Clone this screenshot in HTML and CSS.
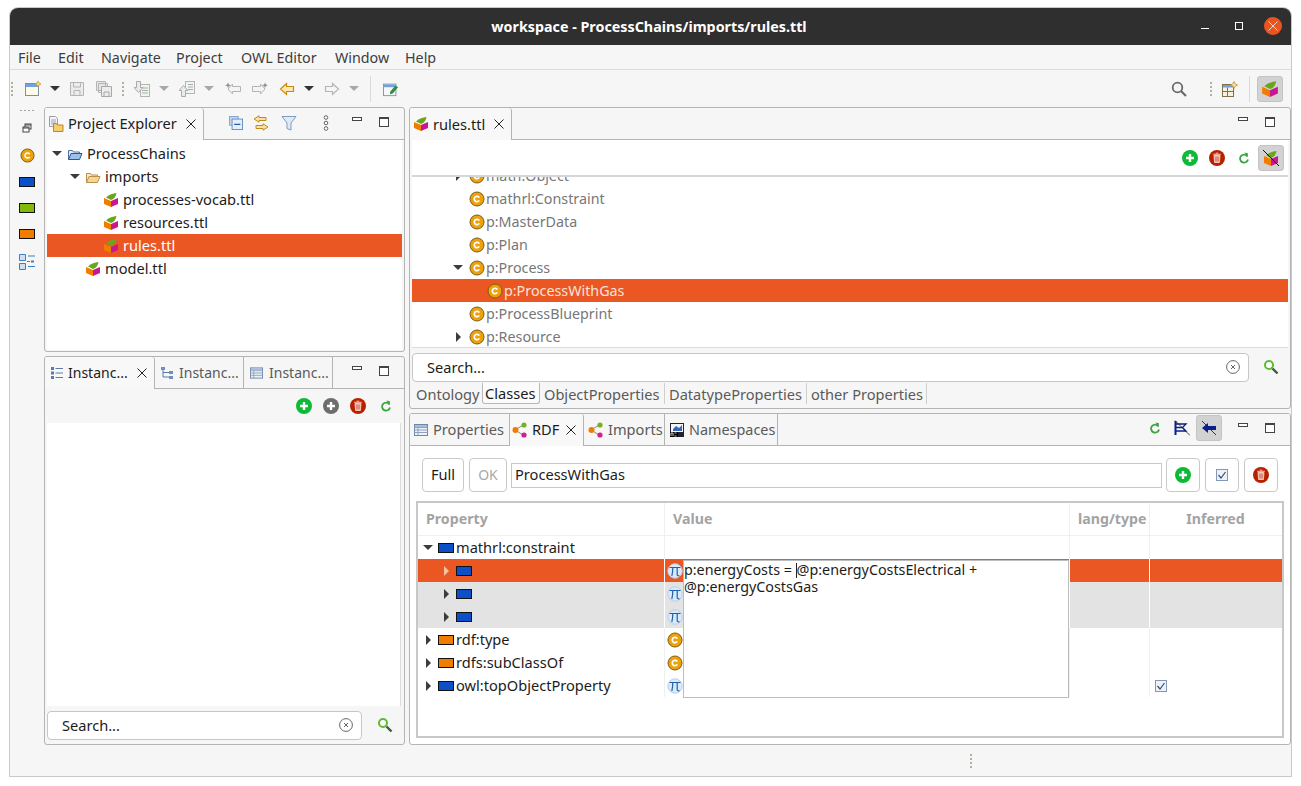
FILE: index.html
```html
<!DOCTYPE html>
<html lang="en">

<head>
    <meta charset="UTF-8">
    <title>workspace - ProcessChains/imports/rules.ttl</title>
    <link rel="stylesheet" href="styles.css">
</head>

<body>
    <!-- icon sprite -->
    <svg class="sprite" xmlns="http://www.w3.org/2000/svg">
        <symbol id="i-cube" viewBox="0 0 16 16">
            <path d="M1 6l7 3v6l-7-3z" fill="#f07d00"/>
            <path d="M8 9l7-3v6l-7 3z" fill="#c9178f"/>
            <path d="M3 5.500C6 2.500 10 1.500 13.500 1c-.5 3-2 6-5.500 7z" fill="#6aa51e"/>
        </symbol>
        <symbol id="i-cube-off" viewBox="0 0 18 18">
            <path d="M2 7l7 3v7l-7-3z" fill="#f07d00"/>
            <path d="M9 10l7-3v7l-7 3z" fill="#c9178f"/>
            <path d="M4 6.500C7 3.500 11 2.500 14.500 2c-.5 3-2 6-5.500 7z" fill="#6aa51e"/>
            <path d="M1 1l16 16" stroke="#111" stroke-width="1"/>
        </symbol>
        <symbol id="i-cls" viewBox="0 0 16 16">
            <circle cx="8" cy="8" r="7" fill="#eda20c" stroke="#7d5c14"/>
            <path d="M10.300 6.600a2.700 2.700 0 1 0 0 2.800" fill="none" stroke="#fff" stroke-width="1.700"/>
        </symbol>
        <symbol id="i-pi" viewBox="0 0 16 16">
            <circle cx="8" cy="8" r="7.200" fill="#dbe9f8" stroke="#b5d0ee"/>
            <path d="M2.500 4.500h11M5.800 4.500c0 3-.3 6-1 8.500M10.200 4.500v7c0 1 .6 1.500 2.300 1.300" fill="none" stroke="#1f62ab" stroke-width="1.200"/>
        </symbol>
        <symbol id="i-add" viewBox="0 0 16 16">
            <circle cx="8" cy="8" r="8" fill="#0cba35"/>
            <path d="M8 4v8M4 8h8" stroke="#fff" stroke-width="2.400"/>
        </symbol>
        <symbol id="i-add-gray" viewBox="0 0 16 16">
            <circle cx="8" cy="8" r="8" fill="#6d6d6d"/>
            <path d="M8 4v8M4 8h8" stroke="#fff" stroke-width="2.400"/>
        </symbol>
        <symbol id="i-del" viewBox="0 0 16 16">
            <circle cx="8" cy="8" r="8" fill="#b82100"/>
            <path d="M5 5.500h6l-.6 7H5.600zM4.200 4.300h7.600M6.700 3.200h2.600" fill="#f5c5b8" stroke="#f5c5b8" stroke-width="1"/>
            <path d="M7 6.500v5M9 6.500v5" stroke="#b82100" stroke-width=".7"/>
        </symbol>
        <symbol id="i-refresh" viewBox="0 0 12 12">
            <path d="M9.500 4.500A4 4 0 1 0 10 7.500" fill="none" stroke="#3aa63f" stroke-width="1.800"/>
            <path d="M6.500 .5l3.500 .8-.6 3.800z" fill="#3aa63f"/>
        </symbol>
        <symbol id="i-search-green" viewBox="0 0 16 16">
            <circle cx="6" cy="6" r="4" fill="#fff" stroke="#5dbb30" stroke-width="2"/>
            <path d="M9.500 9.500l5 5" stroke="#3d5a3a" stroke-width="2.400"/>
        </symbol>
        <symbol id="i-search-gray" viewBox="0 0 16 16">
            <circle cx="6.500" cy="6.500" r="4.800" fill="none" stroke="#6a6a6a" stroke-width="1.800"/>
            <path d="M10 10l5 5" stroke="#6a6a6a" stroke-width="2.200"/>
        </symbol>
        <symbol id="i-clear" viewBox="0 0 14 14">
            <circle cx="7" cy="7" r="6.400" fill="none" stroke="#666"/>
            <path d="M5 5l4 4M9 5l-4 4" stroke="#666"/>
        </symbol>
        <symbol id="i-close" viewBox="0 0 10 10">
            <path d="M.5 .5l9 9M9.500 .5l-9 9" stroke="#222" stroke-width="1"/>
        </symbol>
        <symbol id="i-min" viewBox="0 0 12 12">
            <rect x="1.500" y="1.500" width="9" height="3" fill="#fff" stroke="#444"/>
        </symbol>
        <symbol id="i-max" viewBox="0 0 12 12">
            <rect x="1.500" y="1.500" width="9" height="9" fill="#fff" stroke="#444"/>
            <path d="M1.500 2.500h9" stroke="#444"/>
        </symbol>
        <symbol id="i-proj" viewBox="0 0 16 16">
            <path d="M1.500 .5h6l2 2v8h-8z" fill="#f4f4f4" stroke="#9a9aa5"/>
            <path d="M3 4h5M3 6h5M3 8h5" stroke="#9aa4bf"/>
            <path d="M5.500 7.500h3l1 1.500h5.500v6.500h-9.500z" fill="#f6cd6a" stroke="#b78a2d"/>
        </symbol>
        <symbol id="i-prj-open" viewBox="0 0 16 16">
            <path d="M1.500 13.500v-9h4l1 1.500h6v2" fill="#e4ebf5" stroke="#53709f"/>
            <path d="M1.500 13.500l2.500-6h11l-2.500 6z" fill="#9cc0ea" stroke="#2d5597"/>
        </symbol>
        <symbol id="i-fld-open" viewBox="0 0 16 16">
            <path d="M1.500 13.500v-9h4l1 1.500h6v2" fill="#f8e9c4" stroke="#b8904a"/>
            <path d="M1.500 13.500l2.500-6h11l-2.500 6z" fill="#f4d595" stroke="#b8904a"/>
        </symbol>
        <symbol id="i-collapse" viewBox="0 0 16 16">
            <rect x=".5" y=".5" width="10" height="10" fill="#c6d8ec" stroke="#7f9fc5"/>
            <rect x="3.500" y="3.500" width="12" height="12" fill="#e4eefa" stroke="#5a86bd"/>
            <path d="M6 9.500h7" stroke="#2a5da0" stroke-width="1.400"/>
        </symbol>
        <symbol id="i-link" viewBox="0 0 16 16">
            <path d="M6 .8L1 4l5 3.200V5.500h7V2.500H6z" fill="#f8e3a8" stroke="#c28a1c"/>
            <path d="M10 8.800L15 12l-5 3.200v-1.700H3v-3h7z" fill="#f8e3a8" stroke="#c28a1c"/>
        </symbol>
        <symbol id="i-filter" viewBox="0 0 16 16">
            <path d="M1 1.500h14L10 8v7l-4-1.500V8z" fill="#dfeaf6" stroke="#7d9dc0"/>
        </symbol>
        <symbol id="i-menu" viewBox="0 0 6 16">
            <circle cx="3" cy="2.500" r="1.800" fill="#fff" stroke="#666"/>
            <circle cx="3" cy="8" r="1.800" fill="#fff" stroke="#666"/>
            <circle cx="3" cy="13.500" r="1.800" fill="#fff" stroke="#666"/>
        </symbol>
        <symbol id="i-list" viewBox="0 0 12 12">
            <path d="M4.500 1.500H12M4.500 6H12M4.500 10.500H12" stroke="#5d7ba8"/>
            <path d="M0 0h3v3H0zM0 4.500h3v3H0zM0 9h3v3H0z" fill="#5d7ba8"/>
        </symbol>
        <symbol id="i-hier" viewBox="0 0 12 12">
            <path d="M2 1v9h6M2 5.500h6" fill="none" stroke="#5d7ba8"/>
            <path d="M0 0h4v3H0zM8 4h4v3H8zM8 9h4v3H8z" fill="#6f8fc0"/>
        </symbol>
        <symbol id="i-table" viewBox="0 0 14 12">
            <rect x=".5" y=".5" width="13" height="11" fill="#eef2f8" stroke="#6f86a8"/>
            <path d="M.5 3.500h13M.5 6h13M.5 8.500h13M4 3.500v8" stroke="#8ea2c0"/>
            <path d="M1 1h12v2H1z" fill="#a9bcd8"/>
        </symbol>
        <symbol id="i-rdf" viewBox="0 0 16 16">
            <path d="M3 8l9-5.500M3 8l9 5.500" stroke="#888" stroke-width="1"/>
            <circle cx="3.500" cy="8" r="3" fill="#f07d00"/>
            <circle cx="12" cy="3" r="2.600" fill="#78b020"/>
            <circle cx="12" cy="13" r="2.600" fill="#d0208f"/>
        </symbol>
        <symbol id="i-ns" viewBox="0 0 14 14">
            <rect width="14" height="14" fill="#223"/>
            <rect x="1" y="1" width="12" height="8" fill="#f4f6fa"/>
            <path d="M3 6l3-3 3 2 3-3v6H3z" fill="#3a66b8"/>
            <rect x="0" y="9" width="8" height="5" fill="#000"/>
            <path d="M1 13v-3h2v3M4.500 10h2M4.500 13h2" stroke="#fff" stroke-width=".8" fill="none"/>
        </symbol>
        <symbol id="i-tree-blue" viewBox="0 0 16 16">
            <path d="M0 0h6v6H0zM0 9h6v6H0z" fill="#cfe0f5"/>
            <path d="M.5 .5h6v6h-6zM.5 9.500h6v6h-6zM9 2h7M9 12.500h7M8 7.500h3" fill="none" stroke="#3f7fc4"/>
            <path d="M12 6.500h3v2h-3z" fill="#3f7fc4"/>
        </symbol>
        <symbol id="i-restore" viewBox="0 0 10 10">
            <rect x="3" y="1" width="6" height="5" fill="#fff" stroke="#444"/>
            <rect x="1" y="4" width="6" height="5" fill="#fff" stroke="#444"/>
            <path d="M1 5h6M3 2h6" stroke="#444"/>
        </symbol>
        <symbol id="i-new" viewBox="0 0 16 16">
            <rect x=".5" y="2.500" width="13" height="12" fill="#fff9e8" stroke="#7d8ea5"/>
            <path d="M1 3h12v3H1z" fill="#6fa3dc"/>
            <path d="M13 0l1 2 2 1-2 1-1 2-1-2-2-1 2-1z" fill="#f7d874" stroke="#b98a22" stroke-width=".6"/>
        </symbol>
        <symbol id="i-newpen" viewBox="0 0 18 16">
            <rect x=".5" y="2.500" width="14" height="13" fill="#f5f7fb" stroke="#7d8ea5"/>
            <path d="M1 3h13v3H1z" fill="#6fa3dc"/>
            <path d="M8 11l6-7 3 2-6 7-3 1z" fill="#2f8f3c"/>
        </symbol>
        <symbol id="i-save" viewBox="0 0 16 16">
            <path d="M1.500 1.500h13v13h-13z" fill="#ececec" stroke="#b5b5b5"/>
            <path d="M4.500 2v4h7V2M5 14V9.500h6V14" fill="none" stroke="#b5b5b5"/>
        </symbol>
        <symbol id="i-saveall" viewBox="0 0 16 16">
            <path d="M.5 .5h9v9h-9zM2.500 2.500h9v9h-9z" fill="#e6e6e6" stroke="#b5b5b5"/>
            <path d="M5.500 5.500h10v10h-10z" fill="#ececec" stroke="#a8a8a8"/>
            <path d="M8 11v4M13 11v4M8 11h5" fill="none" stroke="#a8a8a8"/>
        </symbol>
        <symbol id="i-next-anno" viewBox="0 0 16 16">
            <rect x="6.500" y="3.500" width="9" height="12" fill="#f3f3f3" stroke="#b4b4b4"/>
            <path d="M8 7h6M8 9.500h6M8 12h6" stroke="#9fb59f"/>
            <path d="M2.500 .5h4v6h2.500l-4.500 5-4.500-5h2.500z" fill="#eaeaea" stroke="#aaa"/>
        </symbol>
        <symbol id="i-prev-anno" viewBox="0 0 16 16">
            <rect x="6.500" y=".5" width="9" height="12" fill="#f3f3f3" stroke="#b4b4b4"/>
            <path d="M9 3.500h5M9 6h5M9 8.500h5" stroke="#9fb59f"/>
            <path d="M2.500 15.500h4v-6h2.500l-4.500-5-4.500 5h2.500z" fill="#eaeaea" stroke="#aaa"/>
        </symbol>
        <symbol id="i-back-star" viewBox="0 0 16 14">
            <path d="M7.500 2L3 7l4.500 5V9.500h8v-5h-8z" fill="#f4f4f4" stroke="#b4b4b4"/>
            <path d="M3 .5l.8 2L6 3.200l-2.200.8L3 6.200 2.200 4 0 3.200l2.200-.7z" fill="#8a8a8a"/>
        </symbol>
        <symbol id="i-fwd-star" viewBox="0 0 16 14">
            <path d="M8.500 2L13 7l-4.500 5V9.500h-8v-5h8z" fill="#f4f4f4" stroke="#b4b4b4"/>
            <path d="M13 .5l.8 2 2.200.7-2.200.8-.8 2.200-.8-2.200-2.200-.8 2.200-.7z" fill="#8a8a8a"/>
        </symbol>
        <symbol id="i-back" viewBox="0 0 16 14">
            <path d="M7.500 1.500L1.500 7l6 5.500V9.500h7v-5h-7z" fill="#fbe7b0" stroke="#c98a12" stroke-width="1.200"/>
        </symbol>
        <symbol id="i-fwd" viewBox="0 0 16 14">
            <path d="M8.500 1.500l6 5.500-6 5.500V9.500h-7v-5h7z" fill="#f6f6f6" stroke="#b4b4b4" stroke-width="1.200"/>
        </symbol>
        <symbol id="i-persp" viewBox="0 0 16 16">
            <rect x=".5" y="3.500" width="11" height="12" fill="#f8f1df" stroke="#7f6f4b"/>
            <path d="M1 4h10v2.500H1z" fill="#6fa3dc"/>
            <path d="M.5 10.500h11M5.500 6.500v9" stroke="#7f6f4b"/>
            <path d="M12 .5l1.200 2.300 2.300 1.200-2.300 1.200L12 7.500l-1.200-2.500-2.300-1 2.300-1.200z" fill="#f7e3a0" stroke="#c2921e" stroke-width=".8"/>
        </symbol>
        <symbol id="i-flag" viewBox="0 0 16 16">
            <path d="M1.500 1v14" stroke="#0a1f8a" stroke-width="2"/>
            <path d="M2 4h10L8.500 7.500 12 11H2M2 7.500h6" fill="none" stroke="#0a1f8a" stroke-width="1.300"/>
            <path d="M1 .5l15 15" stroke="#222" stroke-width=".8"/>
        </symbol>
        <symbol id="i-inverse" viewBox="0 0 16 16">
            <path d="M15 6H7V3L1 8l6 5v-3h8z" fill="#0a1f8a"/>
            <path d="M1 1l14 14" stroke="#222" stroke-width=".9"/>
        </symbol>
        <symbol id="i-check" viewBox="0 0 12 12">
            <rect x=".5" y=".5" width="11" height="11" fill="#eef2f8" stroke="#8298b5"/>
            <path d="M2.500 6l2.500 3 4.500-6" fill="none" stroke="#33507a" stroke-width="1.200"/>
        </symbol>
    </svg>

    <div class="window">
        <header class="titlebar">
            <span class="title">workspace - ProcessChains/imports/rules.ttl</span>
            <div class="wm-btns">
                <span class="wm-min"></span>
                <span class="wm-max"></span>
                <span class="wm-close"><svg class="ic10"><use href="#i-close"/></svg></span>
            </div>
        </header>

        <nav class="menubar">
            <span>File</span>
            <span>Edit</span>
            <span>Navigate</span>
            <span>Project</span>
            <span>OWL Editor</span>
            <span>Window</span>
            <span>Help</span>
        </nav>

        <div class="toolbar">
            <span class="grip first"></span>
            <span class="tool g6"><svg class="ic16"><use href="#i-new"/></svg></span>
            <span class="drop"></span>
            <span class="tool"><svg class="ic16"><use href="#i-save"/></svg></span>
            <span class="tool g3"><svg class="ic16"><use href="#i-saveall"/></svg></span>
            <span class="gripcell"><span class="grip"></span></span>
            <span class="tool"><svg class="ic16"><use href="#i-next-anno"/></svg></span>
            <span class="drop off"></span>
            <span class="tool g1"><svg class="ic16"><use href="#i-prev-anno"/></svg></span>
            <span class="drop off"></span>
            <span class="tool g2"><svg class="ic16"><use href="#i-back-star"/></svg></span>
            <span class="tool g3"><svg class="ic16"><use href="#i-fwd-star"/></svg></span>
            <span class="tool g3"><svg class="ic16"><use href="#i-back"/></svg></span>
            <span class="drop"></span>
            <span class="tool g1"><svg class="ic16"><use href="#i-fwd"/></svg></span>
            <span class="drop off"></span>
            <span class="sep sep-a"></span>
            <span class="tool g8"><svg class="ic16"><use href="#i-newpen"/></svg></span>
            <span class="tb-space"></span>
            <span class="tool"><svg class="ic16"><use href="#i-search-gray"/></svg></span>
            <span class="grip g15"></span>
            <span class="tool g5"><svg class="ic16"><use href="#i-persp"/></svg></span>
            <span class="sep g8"></span>
            <span class="toggle g7"><svg class="ic18"><use href="#i-cube"/></svg></span>
        </div>

        <div class="workbench">
            <aside class="trim">
                <span class="trim-dots"></span>
                <svg class="ic10 trim-restore"><use href="#i-restore"/></svg>
                <svg class="ic15 trim-c"><use href="#i-cls"/></svg>
                <span class="prop blue trim-p"></span>
                <span class="prop green trim-p"></span>
                <span class="prop orange trim-p"></span>
                <svg class="ic16 trim-tree"><use href="#i-tree-blue"/></svg>
            </aside>

            <div class="col-left">
                <section class="part part-project">
                    <div class="tabbar">
                        <div class="tab active tab-project">
                            <svg class="ic16"><use href="#i-proj"/></svg>
                            <span class="tab-text">Project Explorer</span>
                            <svg class="ic10 tab-x"><use href="#i-close"/></svg>
                        </div>
                        <div class="view-tools">
                            <svg class="ic14"><use href="#i-collapse"/></svg>
                            <svg class="ic16"><use href="#i-link"/></svg>
                            <svg class="ic16 tool-filter"><use href="#i-filter"/></svg>
                            <svg class="ic-menu"><use href="#i-menu"/></svg>
                        </div>
                        <div class="win-btns">
                            <svg class="ic12"><use href="#i-min"/></svg>
                            <svg class="ic12"><use href="#i-max"/></svg>
                        </div>
                    </div>
                    <div class="part-body tree-project">
                        <div class="row lv0"><span class="arr down"></span><svg class="ic16"><use href="#i-prj-open"/></svg><span class="lbl">ProcessChains</span></div>
                        <div class="row lv1"><span class="arr down"></span><svg class="ic16"><use href="#i-fld-open"/></svg><span class="lbl">imports</span></div>
                        <div class="row lv2"><span class="arr"></span><svg class="ic16"><use href="#i-cube"/></svg><span class="lbl">processes-vocab.ttl</span></div>
                        <div class="row lv2"><span class="arr"></span><svg class="ic16"><use href="#i-cube"/></svg><span class="lbl">resources.ttl</span></div>
                        <div class="row lv2 sel"><span class="arr"></span><svg class="ic16"><use href="#i-cube"/></svg><span class="lbl">rules.ttl</span></div>
                        <div class="row lv1"><span class="arr"></span><svg class="ic16"><use href="#i-cube"/></svg><span class="lbl">model.ttl</span></div>
                    </div>
                </section>

                <section class="part part-inst">
                    <div class="tabbar">
                        <div class="tab active tab-inst1">
                            <svg class="ic12"><use href="#i-list"/></svg>
                            <span class="tab-text">Instanc...</span>
                            <svg class="ic10 tab-x"><use href="#i-close"/></svg>
                        </div>
                        <div class="tab tab-inst">
                            <svg class="ic12"><use href="#i-hier"/></svg>
                            <span class="tab-text">Instanc...</span>
                        </div>
                        <div class="tab tab-inst">
                            <svg class="ic13"><use href="#i-table"/></svg>
                            <span class="tab-text">Instanc...</span>
                        </div>
                        <div class="win-btns">
                            <svg class="ic12"><use href="#i-min"/></svg>
                            <svg class="ic12"><use href="#i-max"/></svg>
                        </div>
                    </div>
                    <div class="inst-tools">
                        <svg class="ic16"><use href="#i-add"/></svg>
                        <svg class="ic16"><use href="#i-add-gray"/></svg>
                        <svg class="ic16"><use href="#i-del"/></svg>
                        <svg class="ic12"><use href="#i-refresh"/></svg>
                    </div>
                    <div class="inst-list"></div>
                    <div class="searchrow inst-search">
                        <div class="searchbox">
                            <span>Search...</span>
                            <svg class="ic14"><use href="#i-clear"/></svg>
                        </div>
                        <svg class="ic16 search-go"><use href="#i-search-green"/></svg>
                    </div>
                </section>
            </div>

            <div class="col-right">
                <section class="part part-editor">
                    <div class="tabbar">
                        <div class="tab active tab-rules">
                            <svg class="ic16"><use href="#i-cube"/></svg>
                            <span class="tab-text">rules.ttl</span>
                            <svg class="ic10 tab-x"><use href="#i-close"/></svg>
                        </div>
                        <div class="win-btns">
                            <svg class="ic12"><use href="#i-min"/></svg>
                            <svg class="ic12"><use href="#i-max"/></svg>
                        </div>
                    </div>
                    <div class="ed-tools">
                        <svg class="ic16"><use href="#i-add"/></svg>
                        <svg class="ic16"><use href="#i-del"/></svg>
                        <svg class="ic12"><use href="#i-refresh"/></svg>
                        <span class="toggle"><svg class="ic18"><use href="#i-cube-off"/></svg></span>
                    </div>
                    <div class="class-tree">
                        <div class="row lv1 gray clipped"><span class="arr right"></span><svg class="ic16"><use href="#i-cls"/></svg><span>math:Object</span></div>
                        <div class="row lv1 gray"><span class="arr"></span><svg class="ic16"><use href="#i-cls"/></svg><span>mathrl:Constraint</span></div>
                        <div class="row lv1 gray"><span class="arr"></span><svg class="ic16"><use href="#i-cls"/></svg><span>p:MasterData</span></div>
                        <div class="row lv1 gray"><span class="arr"></span><svg class="ic16"><use href="#i-cls"/></svg><span>p:Plan</span></div>
                        <div class="row lv1 gray"><span class="arr down"></span><svg class="ic16"><use href="#i-cls"/></svg><span>p:Process</span></div>
                        <div class="row lv2 gray sel"><span class="arr"></span><svg class="ic16"><use href="#i-cls"/></svg><span>p:ProcessWithGas</span></div>
                        <div class="row lv1 gray"><span class="arr"></span><svg class="ic16"><use href="#i-cls"/></svg><span>p:ProcessBlueprint</span></div>
                        <div class="row lv1 gray"><span class="arr right"></span><svg class="ic16"><use href="#i-cls"/></svg><span>p:Resource</span></div>
                    </div>
                    <div class="searchrow ed-search">
                        <div class="searchbox">
                            <span>Search...</span>
                            <svg class="ic14"><use href="#i-clear"/></svg>
                        </div>
                        <svg class="ic16 search-go"><use href="#i-search-green"/></svg>
                    </div>
                    <div class="subtabs">
                        <span class="st-onto">Ontology</span>
                        <span class="st-cls active">Classes</span>
                        <span class="st-obj">ObjectProperties</span>
                        <span class="st-dat">DatatypeProperties</span>
                        <span class="st-oth">other Properties</span>
                    </div>
                </section>

                <section class="part part-rdf">
                    <div class="tabbar">
                        <div class="tab tab-props">
                            <svg class="ic14"><use href="#i-table"/></svg>
                            <span class="tab-text">Properties</span>
                        </div>
                        <div class="tab active tab-rdf">
                            <svg class="ic16"><use href="#i-rdf"/></svg>
                            <span class="tab-text">RDF</span>
                            <svg class="ic10 tab-x"><use href="#i-close"/></svg>
                        </div>
                        <div class="tab tab-imports">
                            <svg class="ic16"><use href="#i-rdf"/></svg>
                            <span class="tab-text">Imports</span>
                        </div>
                        <div class="tab tab-ns">
                            <svg class="ic14"><use href="#i-ns"/></svg>
                            <span class="tab-text">Namespaces</span>
                        </div>
                        <div class="rdf-tools">
                            <svg class="ic12"><use href="#i-refresh"/></svg>
                            <svg class="ic16"><use href="#i-flag"/></svg>
                            <span class="toggle"><svg class="ic16"><use href="#i-inverse"/></svg></span>
                        </div>
                        <div class="win-btns">
                            <svg class="ic12"><use href="#i-min"/></svg>
                            <svg class="ic12"><use href="#i-max"/></svg>
                        </div>
                    </div>
                    <div class="formrow">
                        <span class="btn btn-full">Full</span>
                        <span class="btn btn-ok">OK</span>
                        <span class="field">ProcessWithGas</span>
                        <span class="btn btn-ic"><svg class="ic16"><use href="#i-add"/></svg></span>
                        <span class="btn btn-ic"><svg class="ic12"><use href="#i-check"/></svg></span>
                        <span class="btn btn-ic"><svg class="ic16"><use href="#i-del"/></svg></span>
                    </div>
                    <div class="grid">
                        <div class="gr head">
                            <div class="c">Property</div>
                            <div class="c">Value</div>
                            <div class="c">lang/type</div>
                            <div class="c mid">Inferred</div>
                        </div>
                        <div class="gr">
                            <div class="c row lv0"><span class="arr down"></span><span class="prop blue"></span><span class="lbl">mathrl:constraint</span></div>
                            <div class="c"></div><div class="c"></div><div class="c"></div>
                        </div>
                        <div class="gr sel">
                            <div class="c row lv1"><span class="arr right"></span><span class="prop blue"></span></div>
                            <div class="c val"><svg class="ic16"><use href="#i-pi"/></svg></div>
                            <div class="c"></div><div class="c"></div>
                        </div>
                        <div class="gr hl">
                            <div class="c row lv1"><span class="arr right"></span><span class="prop blue"></span></div>
                            <div class="c val"><svg class="ic16"><use href="#i-pi"/></svg></div>
                            <div class="c"></div><div class="c"></div>
                        </div>
                        <div class="gr hl">
                            <div class="c row lv1"><span class="arr right"></span><span class="prop blue"></span></div>
                            <div class="c val"><svg class="ic16"><use href="#i-pi"/></svg></div>
                            <div class="c"></div><div class="c"></div>
                        </div>
                        <div class="gr">
                            <div class="c row lv0"><span class="arr right"></span><span class="prop orange"></span><span class="lbl">rdf:type</span></div>
                            <div class="c val"><svg class="ic16"><use href="#i-cls"/></svg></div>
                            <div class="c"></div><div class="c"></div>
                        </div>
                        <div class="gr">
                            <div class="c row lv0"><span class="arr right"></span><span class="prop orange"></span><span class="lbl">rdfs:subClassOf</span></div>
                            <div class="c val"><svg class="ic16"><use href="#i-cls"/></svg></div>
                            <div class="c"></div><div class="c"></div>
                        </div>
                        <div class="gr">
                            <div class="c row lv0"><span class="arr right"></span><span class="prop blue"></span><span class="lbl">owl:topObjectProperty</span></div>
                            <div class="c val"><svg class="ic16"><use href="#i-pi"/></svg></div>
                            <div class="c"></div>
                            <div class="c chk"><svg class="ic12"><use href="#i-check"/></svg></div>
                        </div>
                        <div class="cell-editor">p:energyCosts = <span class="caret"></span>@p:energyCostsElectrical +<br>@p:energyCostsGas</div>
                    </div>
                </section>
            </div>
        </div>

        <footer class="statusbar"><span class="grip"></span></footer>
    </div>
</body>

</html>
```
FILE: styles.css
```css
* {
    box-sizing: border-box;
    margin: 0;
    padding: 0;
}

html,
body {
    height: 100%;
}

body {
    background: #fff;
    padding: 8px 0 0 10px;
    font-family: "Noto Sans", "Liberation Sans", sans-serif;
    font-size: 14.6px;
    color: #1c1c1c;
    overflow: hidden;
}

svg {
    display: block;
    flex: none;
}

.sprite {
    display: none;
}

.ic10 { width: 10px; height: 10px; }
.ic12 { width: 12px; height: 12px; }
.ic13 { width: 13px; height: 12px; }
.ic14 { width: 14px; height: 14px; }
.ic15 { width: 15px; height: 15px; }
.ic16 { width: 16px; height: 16px; }
.ic18 { width: 18px; height: 18px; }
.ic-menu { width: 6px; height: 16px; }

.window {
    width: 1281px;
    height: 768px;
    background: #f6f6f6;
    border-radius: 8px 8px 0 0;
    box-shadow: 0 0 0 1px #c9c9c9;
    display: flex;
    flex-direction: column;
}

/* title bar */
.titlebar {
    height: 37px;
    flex: none;
    background: #302f2f;
    border-radius: 8px 8px 0 0;
    padding-right: 3px;
    display: flex;
    align-items: center;
    justify-content: center;
    position: relative;
}

.title {
    color: #fff;
    font-size: 14.3px;
    font-weight: 700;
}

.wm-btns {
    position: absolute;
    right: 9px;
    top: 9px;
    display: flex;
    align-items: center;
    height: 18px;
}

.wm-min {
    width: 8px;
    height: 1px;
    background: #fff;
    margin-top: 5px;
}

.wm-max {
    width: 8px;
    height: 8px;
    border: 1px solid #fff;
    margin-left: 26px;
}

.wm-close {
    width: 18px;
    height: 18px;
    border-radius: 50%;
    background: #e95420;
    margin-left: 21px;
    display: flex;
    align-items: center;
    justify-content: center;
}

.wm-close svg {
    filter: invert(1);
}

/* menu */
.menubar {
    height: 25px;
    flex: none;
    border-bottom: 1px solid #dcdcdc;
    padding-left: 8px;
    display: grid;
    grid-template-columns: 40px 43px 75px 65px 94px 70px auto;
    align-items: center;
    font-size: 14.3px;
    color: #3d3d3d;
}

/* toolbar */
.toolbar {
    height: 37px;
    flex: none;
    display: flex;
    align-items: center;
    padding: 0 8px 0 0;
}

.tool {
    width: 24px;
    height: 24px;
    display: flex;
    align-items: center;
    justify-content: center;
    flex: none;
}

.drop {
    width: 20px;
    display: flex;
    justify-content: center;
    flex: none;
}

.drop::before {
    content: "";
    border-left: 5px solid transparent;
    border-right: 5px solid transparent;
    border-top: 5px solid #333;
}

.drop.off::before {
    border-top-color: #a8a8a8;
}

.grip {
    width: 2px;
    height: 14px;
    background: repeating-linear-gradient(#b5ad9f 0 2px, transparent 2px 4px);
    flex: none;
}

.grip.first {
    margin-left: 1px;
}

.gripcell {
    width: 14px;
    display: flex;
    justify-content: center;
}

.sep {
    width: 1px;
    height: 26px;
    background: #dadada;
    flex: none;
}

.sep-a { margin-left: 6px; }
.g1 { margin-left: 1px; }
.g2 { margin-left: 2px; }
.g3 { margin-left: 3px; }
.g5 { margin-left: 6px; }
.g6 { margin-left: 8px; }
.g7 { margin-left: 7px; }
.g8 { margin-left: 8px; }
.sep.g8 { margin-left: 7px; }
.g15 { margin-left: 19px; }

.tb-space {
    flex: 1;
}

.toggle {
    width: 26px;
    height: 26px;
    background: #d2d2d2;
    border: 1px solid #c4c4c4;
    border-radius: 3px;
    display: flex;
    align-items: center;
    justify-content: center;
    flex: none;
}

/* workbench */
.workbench {
    height: 638px;
    flex: none;
    display: flex;
}

.trim {
    width: 34px;
    flex: none;
    display: flex;
    flex-direction: column;
    align-items: center;
}

.trim-dots {
    width: 14px;
    height: 1px;
    margin-top: 3px;
    background: repeating-linear-gradient(90deg, #a9a39a 0 2px, transparent 2px 4px);
}

.trim-restore { margin-top: 12px; }
.trim-c { margin-top: 15px; }

.col-left {
    width: 361px;
    flex: none;
    display: flex;
    flex-direction: column;
    gap: 4px;
}

.col-right {
    width: 882px;
    margin-left: 4px;
    flex: none;
    display: flex;
    flex-direction: column;
    gap: 4px;
}

.part {
    background: #f6f6f6;
    border: 1px solid #b4b4b4;
    border-radius: 3px;
    display: flex;
    flex-direction: column;
    flex: none;
    overflow: hidden;
}

.part-project { height: 245px; }
.part-inst { height: 389px; }
.part-editor { height: 302px; }
.part-rdf { height: 332px; }

/* tabs */
.tabbar {
    height: 32px;
    flex: none;
    display: flex;
    border-bottom: 1px solid #b4b4b4;
}

.tab {
    height: 31px;
    padding-left: 5px;
    border-right: 1px solid #b4b4b4;
    display: flex;
    align-items: center;
    flex: none;
    color: #5a5a5a;
}

.tab.active {
    height: 32px;
    padding-bottom: 1px;
    background: #f8f8f8;
    color: #1c1c1c;
    margin-bottom: -1px;
    border-radius: 0 3px 0 0;
}

.tab-text {
    margin: 0 0 2px 4px;
    white-space: nowrap;
}

.tab-x {
    margin-left: auto;
    margin-right: 7px;
}

.tab-project { width: 159px; padding-left: 3px; }
.tab-inst1 { width: 110px; padding-left: 6px; }
.tab-inst1 .tab-text { margin: 0 0 0 5px; font-size: 14px; }
.tab-inst { width: 89px; padding-left: 6px; }
.tab-inst .tab-text { margin: 0 0 0 6px; font-size: 14px; }
.tab-rules { width: 102px; padding-left: 3px; }
.tab-rules .tab-text { margin-bottom: 0; }
.tab-props { width: 100px; padding-left: 4px; }
.tab-props .tab-text { margin-left: 5px; }
.tab-rdf { width: 74px; padding-left: 2px; }
.tab-imports { width: 81px; padding-left: 4px; }
.tab-ns { width: 113px; padding-left: 5px; }
.tab-ns .tab-text { margin: 0 0 0 5px; font-size: 14.4px; }

.win-btns {
    margin-left: auto;
    padding: 8px 14px 0 0;
    display: flex;
    gap: 15px;
    align-self: flex-start;
}

.view-tools {
    display: flex;
    align-items: center;
    margin-left: 25px;
    margin-top: -1px;
    gap: 10px;
}

.view-tools .tool-filter {
    margin-left: 2px;
}

.view-tools .ic-menu {
    margin-left: 16px;
}

.rdf-tools {
    margin-left: auto;
    display: flex;
    align-items: center;
    gap: 6px;
    margin-top: -3px;
}

.rdf-tools .ic12 {
    margin-right: 7px;
}

.rdf-tools + .win-btns {
    margin-left: 15px;
}

/* trees */
.part-body {
    flex: 1;
    background: #fff;
    margin: 0 2px 1px;
}

.tree-project {
    padding-top: 2px;
}

.row {
    height: 23px;
    display: flex;
    align-items: center;
    white-space: nowrap;
}

.row.sel,
.gr.sel {
    background: #eb5723;
    color: #fff;
}

.row > svg {
    margin: 0 4px 0 2px;
}

.lbl {
    margin-bottom: 2px;
}

.lv0 { padding-left: 2px; }
.lv1 { padding-left: 20px; }
.lv2 { padding-left: 38px; }

.arr {
    width: 16px;
    height: 16px;
    flex: none;
    display: flex;
    align-items: center;
    justify-content: center;
}

.arr.down::before {
    content: "";
    border-left: 5px solid transparent;
    border-right: 5px solid transparent;
    border-top: 5px solid #3c3c3c;
}

.arr.right::before {
    content: "";
    border-top: 5px solid transparent;
    border-bottom: 5px solid transparent;
    border-left: 5px solid #3c3c3c;
}

.sel .arr.right::before {
    border-left-color: #f3c2a4;
}

/* instances */
.inst-tools {
    height: 34px;
    flex: none;
    padding-left: 251px;
    display: flex;
    align-items: center;
    gap: 11px;
}

.inst-tools .ic12 {
    margin-left: 3px;
}

.inst-list {
    height: 283px;
    flex: none;
    background: #fff;
    margin: 0 3px 0 2px;
    border-right: 1px solid #dcdcdc;
}

.searchrow {
    display: flex;
    align-items: center;
    flex: none;
}

.searchbox {
    height: 29px;
    background: #fff;
    border: 1px solid #c6c6c6;
    border-radius: 4px;
    padding: 0 8px 0 14px;
    display: flex;
    align-items: center;
    justify-content: space-between;
}

.inst-search {
    height: 38px;
    padding-left: 2px;
}

.inst-search .searchbox {
    width: 315px;
}

.search-go {
    margin-left: 14px;
}

.inst-search .search-go {
    margin-left: 15px;
}

/* editor */
.ed-tools {
    height: 37px;
    flex: none;
    margin: 0 2px;
    background: #fff;
    border-bottom: 2px solid #d6d6d6;
    padding-right: 4px;
    display: flex;
    align-items: center;
    justify-content: flex-end;
    gap: 11px;
}

.ed-tools .ic12 {
    margin-left: 2px;
}

.ed-tools .toggle {
    margin-left: -3px;
}

.class-tree {
    height: 171px;
    flex: none;
    margin: 0 2px;
    padding-left: 18px;
    background: #fff;
    border-bottom: 1px solid #dcdcdc;
    overflow: hidden;
    font-size: 14.3px;
    color: #777;
}

.class-tree .row {
    margin-left: -18px;
    padding-left: 38px;
}

.class-tree .row.lv2 {
    padding-left: 56px;
}

.class-tree .row > svg {
    margin: 0 1px 0 3px;
}

.class-tree .sel {
    color: #f6e3da;
}

.clipped {
    margin-top: -13px;
}

.ed-search {
    height: 34px;
    padding: 4px 0 0 2px;
}

.ed-search .searchbox {
    width: 837px;
}

.subtabs {
    height: 23px;
    margin-top: 1px;
    flex: none;
    display: flex;
    padding-left: 2px;
    color: #5a5a5a;
}

.subtabs span {
    height: 21px;
    padding-left: 4px;
    border-right: 1px solid #cfcfcf;
    display: flex;
    align-items: center;
    white-space: nowrap;
}

.subtabs .st-onto { width: 70px; border-right: 0; }
.subtabs .st-cls { width: 58px; }
.subtabs .st-obj { width: 125px; }
.subtabs .st-dat { width: 142px; }
.subtabs .st-oth { width: 120px; }

.subtabs .active {
    color: #1c1c1c;
    background: #fbfbfb;
    border: 1px solid #b8b8b8;
    border-top: 0;
    border-radius: 0 0 3px 3px;
    padding-left: 2px;
}

/* rdf view */
.part-rdf {
    background: #fff;
}

.part-rdf .tabbar {
    background: #f6f6f6;
}

.formrow {
    height: 34px;
    margin: 12px 12px 0;
    flex: none;
    display: flex;
    align-items: center;
}

.btn {
    height: 34px;
    padding-bottom: 2px;
    border: 1px solid #c9c9c9;
    border-radius: 4px;
    background: #fff;
    display: flex;
    align-items: center;
    justify-content: center;
    flex: none;
}

.btn-ic { padding-bottom: 0; }
.btn-full { width: 42px; }
.btn-ok { width: 38px; margin-left: 5px; color: #a8a8a8; font-size: 14px; }
.btn-ic { width: 34px; margin-left: 5px; }
.field + .btn-ic { margin-left: 4px; }

.field {
    width: 651px;
    height: 25px;
    margin-left: 4px;
    padding: 0 0 3px 3px;
    border: 1px solid #c9c9c9;
    display: flex;
    align-items: center;
}

.grid {
    margin: 9px 6px 0;
    height: 237px;
    flex: none;
    border: 2px solid #c8c8c8;
    position: relative;
}

.gr {
    display: grid;
    grid-template-columns: 247px 405px 80px 132px;
    height: 23px;
}

.gr .c {
    border-right: 1px solid #efefef;
    min-width: 0;
}

.gr .c:last-child {
    border-right: 0;
}

.gr.sel .c,
.gr.hl .c {
    border-right-color: #fff;
}

.gr.hl {
    background: #e3e3e3;
}

.head {
    height: 33px;
    border-bottom: 1px solid #efefef;
    font-size: 14.2px;
    font-weight: 700;
    color: #a3a3a3;
}

.head .c {
    padding: 0 0 2px 8px;
    display: flex;
    align-items: center;
}

.head .mid {
    padding: 0 1px 2px 0;
    justify-content: center;
}

.prop {
    width: 16px;
    height: 10px;
    border: 1px solid #111;
    flex: none;
    margin: 0 2px 0 2px;
}

.prop.blue { background: #0b50c8; }
.prop.green { background: #84b80a; }
.prop.orange { background: #f07d00; }

.trim-c + .trim-p { margin: 14px 0 0; }
.trim-p { margin: 16px 0 0; }
.trim-tree { margin-top: 15px; }

.val {
    padding-left: 2px;
    display: flex;
    align-items: center;
}

.chk {
    padding-left: 5px;
    display: flex;
    align-items: center;
}

.cell-editor {
    position: absolute;
    left: 265px;
    top: 57px;
    width: 386px;
    height: 138px;
    background: #fff;
    border: 1px solid #bdbdbd;
    padding: 0 1px 0 0;
    font-size: 14.3px;
    line-height: 17px;
    color: #1c1c1c;
}

.caret {
    display: inline-block;
    width: 1px;
    height: 15px;
    background: #222;
    vertical-align: -3px;
}

/* status */
.statusbar {
    flex: 1;
    display: flex;
    align-items: center;
    padding-left: 960px;
}
```
